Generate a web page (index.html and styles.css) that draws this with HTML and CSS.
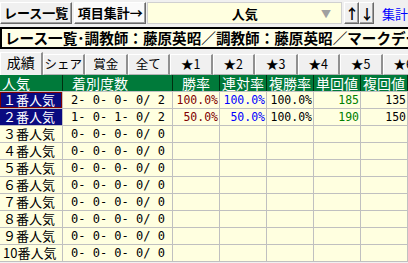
FILE: index.html
```html
<!DOCTYPE html>
<html lang="ja">
<head>
  <meta charset="UTF-8" />
  <title>項目集計</title>
  <link rel="stylesheet" href="styles.css">
</head>
<body>
  <div class="toolbar">
    <button class="btn">レース一覧</button>
    <button class="btn btn-on">項目集計→</button>
    <div class="select">
      <span class="select-text">人気</span>
      <span class="select-arrow">▼</span>
    </div>
    <button class="btn arrow">↑</button>
    <button class="btn arrow">↓</button>
    <span class="link">集計</span>
  </div>

  <div class="title">レース一覧･調教師：藤原英昭／調教師：藤原英昭／マークデータ</div>

  <div class="tabs">
    <div class="tab active">成績</div>
    <div class="tab">シェア</div>
    <div class="tab">賞金</div>
    <div class="tab">全て</div>
    <div class="tab">★1</div>
    <div class="tab">★2</div>
    <div class="tab">★3</div>
    <div class="tab">★4</div>
    <div class="tab">★5</div>
    <div class="tab">★6</div>
  </div>

  <div class="grid">
    <div class="hd first">人気</div>
    <div class="hd wide">着別度数</div>
    <div class="hd">勝率</div>
    <div class="hd">連対率</div>
    <div class="hd">複勝率</div>
    <div class="hd">単回値</div>
    <div class="hd">複回値</div>

    <div class="rh sel focus">１番人気</div>
    <div class="c cnt">2- 0- 0- 0/ 2</div>
    <div class="c num win">100.0%</div>
    <div class="c num ren">100.0%</div>
    <div class="c num">100.0%</div>
    <div class="c num tan">185</div>
    <div class="c num">135</div>

    <div class="rh sel">２番人気</div>
    <div class="c cnt">1- 0- 1- 0/ 2</div>
    <div class="c num win">50.0%</div>
    <div class="c num ren">50.0%</div>
    <div class="c num">100.0%</div>
    <div class="c num tan">190</div>
    <div class="c num">150</div>

    <div class="rh">３番人気</div>
    <div class="c cnt">0- 0- 0- 0/ 0</div>
    <div class="c"></div><div class="c"></div><div class="c"></div><div class="c"></div><div class="c"></div>

    <div class="rh">４番人気</div>
    <div class="c cnt">0- 0- 0- 0/ 0</div>
    <div class="c"></div><div class="c"></div><div class="c"></div><div class="c"></div><div class="c"></div>

    <div class="rh">５番人気</div>
    <div class="c cnt">0- 0- 0- 0/ 0</div>
    <div class="c"></div><div class="c"></div><div class="c"></div><div class="c"></div><div class="c"></div>

    <div class="rh">６番人気</div>
    <div class="c cnt">0- 0- 0- 0/ 0</div>
    <div class="c"></div><div class="c"></div><div class="c"></div><div class="c"></div><div class="c"></div>

    <div class="rh">７番人気</div>
    <div class="c cnt">0- 0- 0- 0/ 0</div>
    <div class="c"></div><div class="c"></div><div class="c"></div><div class="c"></div><div class="c"></div>

    <div class="rh">８番人気</div>
    <div class="c cnt">0- 0- 0- 0/ 0</div>
    <div class="c"></div><div class="c"></div><div class="c"></div><div class="c"></div><div class="c"></div>

    <div class="rh">９番人気</div>
    <div class="c cnt">0- 0- 0- 0/ 0</div>
    <div class="c"></div><div class="c"></div><div class="c"></div><div class="c"></div><div class="c"></div>

    <div class="rh">10番人気</div>
    <div class="c cnt">0- 0- 0- 0/ 0</div>
    <div class="c"></div><div class="c"></div><div class="c"></div><div class="c"></div><div class="c"></div>
  </div>
</body>
</html>
```

FILE: styles.css
```css
* {
  box-sizing: border-box;
  margin: 0;
  padding: 0;
}

body {
  font-family: "Noto Sans CJK JP", "DejaVu Sans", sans-serif;
  font-size: 13px;
  background-color: #f0f0f0;
  color: #000;
  width: 408px;
  height: 263px;
  overflow: hidden;
}

.toolbar {
  display: flex;
  align-items: center;
  height: 25px;
  padding-top: 1px;
}

.btn {
  font-family: inherit;
  font-weight: bold;
  font-size: 13px;
  height: 22px;
  width: 73px;
  line-height: 18px;
  background-color: #f0f0f0;
  border: 1px solid;
  border-color: #fff #696969 #696969 #fff;
  box-shadow: inset -1px -1px 0 #a0a0a0;
  margin-right: 2px;
}

.btn-on {
  background-color: #fafafa;
  margin-right: 1px;
}

.select {
  display: flex;
  align-items: center;
  width: 197px;
  height: 22px;
  background-color: #ffffe0;
  border: 1px solid #d0d0d0;
  margin-right: 2px;
}

.select-text {
  flex: 1;
  text-align: center;
  font-weight: bold;
  font-size: 13px;
  padding-left: 20px;
}

.select-arrow {
  color: #a0a0a0;
  font-size: 10px;
  width: 20px;
}

.btn.arrow {
  width: 15px;
  margin-right: 0;
  font-size: 14px;
  padding: 0;
}

.link {
  color: #0000ff;
  margin-left: 8px;
  white-space: nowrap;
}

.title {
  margin-top: 2px;
  height: 22px;
  border: 2px solid #000;
  border-right: none;
  background-color: #ffffe8;
  font-weight: bold;
  font-size: 14.6px;
  line-height: 17px;
  padding-left: 3px;
  white-space: nowrap;
  overflow: hidden;
}

.tabs {
  display: flex;
  height: 23px;
  margin-top: 3px;
  overflow: hidden;
}

.tab {
  flex: none;
  width: 42.5px;
  height: 21px;
  margin-top: 2px;
  border: 1px solid #b4b4b4;
  border-left-color: #fff;
  border-top-color: #fff;
  border-right: 2px solid #909090;
  background-color: #f0f0f0;
  text-align: center;
  font-size: 12.5px;
  line-height: 18px;
  white-space: nowrap;
}

.tab.active {
  margin-top: 0;
  height: 23px;
  border-bottom: none;
  font-size: 14px;
}

.grid {
  display: grid;
  grid-template-columns: 62px 109px 46px 46px 46px 46px 46px;
  grid-auto-rows: 16px;
  column-gap: 1px;
  row-gap: 1px;
  width: 408px;
  background-color: #c0c0c0;
  border-right: 1px solid #c0c0c0;
  border-bottom: 1px solid #c0c0c0;
}

.hd {
  background-color: #007a3a;
  color: #fff;
  font-size: 14px;
  line-height: 16px;
  text-align: center;
  white-space: nowrap;
  border-right: 1px solid #003010;
  margin-right: -1px;
}

.hd.first {
  text-align: left;
  padding-left: 2px;
}

.hd.wide {
  text-align: left;
  padding-left: 9px;
}

.rh {
  background-color: #ffffe0;
  font-size: 13px;
  line-height: 16px;
  padding-left: 3px;
  white-space: nowrap;
}

.rh.sel {
  background-color: #0a0a80;
  color: #fff;
}

.rh.focus {
  box-shadow: inset 0 0 0 1px #800000;
}

.c {
  background-color: #ffffe0;
  line-height: 16px;
  font-size: 12px;
}

.cnt {
  font-family: "DejaVu Sans Mono", monospace;
  padding-left: 8px;
  white-space: pre;
}

.num {
  text-align: right;
  padding-right: 1px;
  font-family: "DejaVu Sans Mono", monospace;
  font-size: 11.5px;
}

.win { color: #800000; }
.ren { color: #0000ff; }
.tan { color: #008000; }
```
